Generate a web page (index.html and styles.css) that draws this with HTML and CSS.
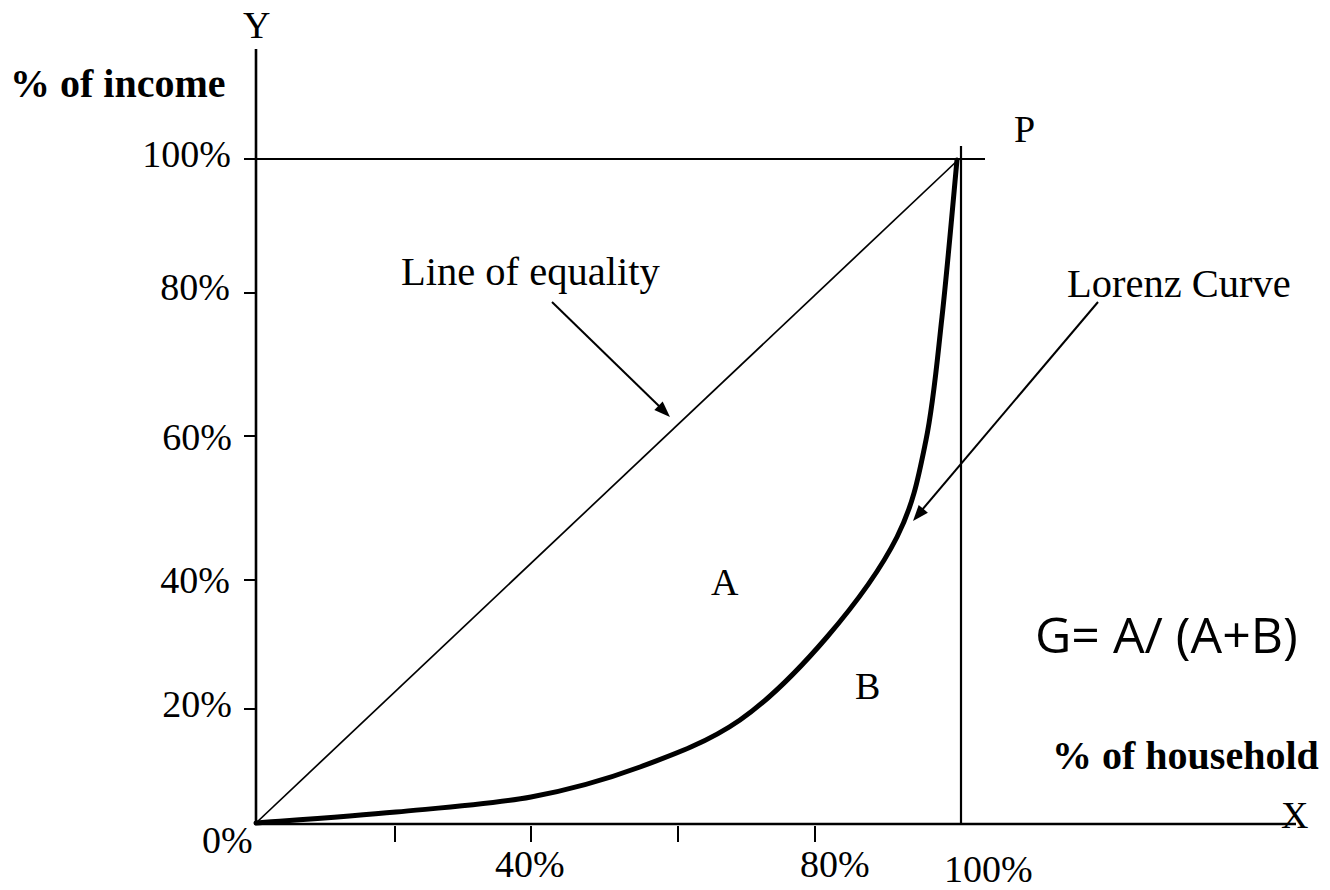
FILE: index.html
```html
<!DOCTYPE html>
<html lang="en">
<head>
<meta charset="utf-8">
<title>Lorenz Curve</title>
<link rel="stylesheet" href="styles.css">
</head>
<body>
<div class="figure">
<svg class="chart" width="1330" height="890" viewBox="0 0 1330 890" xmlns="http://www.w3.org/2000/svg">
  <!-- axes -->
  <line class="axis" x1="256" y1="49" x2="256" y2="825"/>
  <line class="axis" x1="255" y1="824" x2="1296" y2="824"/>
  <!-- 100% lines -->
  <line class="frame" x1="256" y1="159" x2="985" y2="159"/>
  <line class="frame" x1="961" y1="146" x2="961" y2="824"/>
  <!-- y ticks -->
  <line class="tick" x1="244" y1="159" x2="256" y2="159"/>
  <line class="tick" x1="244" y1="293" x2="256" y2="293"/>
  <line class="tick" x1="244" y1="436" x2="256" y2="436"/>
  <line class="tick" x1="244" y1="580" x2="256" y2="580"/>
  <line class="tick" x1="244" y1="709" x2="256" y2="709"/>
  <!-- x ticks -->
  <line class="tick" x1="395" y1="826" x2="395" y2="842"/>
  <line class="tick" x1="531" y1="826" x2="531" y2="842"/>
  <line class="tick" x1="678" y1="826" x2="678" y2="842"/>
  <line class="tick" x1="815" y1="826" x2="815" y2="842"/>
  <!-- line of equality -->
  <line class="equality" x1="256" y1="823" x2="958" y2="160"/>
  <!-- Lorenz curve -->
  <path class="lorenz" d="M256,823
    C279.3,821.2 350.2,816.3 396,812
    C441.8,807.7 490.3,804.5 531,797
    C571.7,789.5 605.2,779.8 640,767
    C674.8,754.2 708.8,741.7 740,720
    C771.2,698.3 800.8,667.5 827,637
    C853.2,606.5 880.5,569.8 897,537
    C913.5,504.2 918.5,476.7 926,440
    C933.5,403.3 936.8,363.7 942,317
    C947.2,270.3 954.5,186.2 957,160"/>
  <!-- arrows -->
  <line class="arrow" x1="552" y1="302" x2="660" y2="407"/>
  <polygon class="head" points="670,417 654.3,410.1 662.7,401.5"/>
  <line class="arrow" x1="1098" y1="302" x2="922" y2="510"/>
  <polygon class="head" points="913,521 918.7,504.9 927.9,512.7"/>

  <!-- text -->
  <text class="lbl" x="243" y="38">Y</text>
  <text class="title" x="10" y="97">% of income</text>
  <text class="lbl" x="231" y="167" text-anchor="end">100%</text>
  <text class="lbl" x="230" y="300" text-anchor="end">80%</text>
  <text class="lbl" x="232" y="450" text-anchor="end">60%</text>
  <text class="lbl" x="230" y="593" text-anchor="end">40%</text>
  <text class="lbl" x="232" y="717" text-anchor="end">20%</text>
  <text class="lbl" x="202" y="853">0%</text>
  <text class="lbl" x="495" y="877">40%</text>
  <text class="lbl" x="800" y="877">80%</text>
  <text class="lbl" x="944" y="882">100%</text>
  <text class="note" x="401" y="285">Line of equality</text>
  <text class="note" x="1067" y="297">Lorenz Curve</text>
  <text class="lbl" x="711" y="595">A</text>
  <text class="lbl" x="855" y="699">B</text>
  <text class="lbl" x="1014" y="142">P</text>
  <text class="lbl" x="1281" y="828">X</text>
  <text class="formula" x="1035" y="653">G= A/ (A+B)</text>
  <text class="title" x="1052" y="769">% of household</text>
</svg>
</div>
</body>
</html>
```

FILE: styles.css
```css
html, body {
  margin: 0;
  padding: 0;
  background: #ffffff;
}

.figure {
  width: 1330px;
  height: 890px;
  overflow: hidden;
}

.chart {
  display: block;
}

.axis {
  stroke: #000;
  stroke-width: 2.6;
}

.frame {
  stroke: #000;
  stroke-width: 2.2;
}

.tick {
  stroke: #000;
  stroke-width: 2;
}

.equality {
  stroke: #000;
  stroke-width: 1.7;
}

.lorenz {
  fill: none;
  stroke: #000;
  stroke-width: 5;
  stroke-linejoin: round;
  stroke-linecap: round;
}

.arrow {
  stroke: #000;
  stroke-width: 2;
}

.head {
  fill: #000;
}

.lbl {
  font-family: "Liberation Serif", "Times New Roman", serif;
  font-size: 38px;
  fill: #000;
}

.note {
  font-family: "Liberation Serif", "Times New Roman", serif;
  font-size: 40.5px;
  fill: #000;
}

.title {
  font-family: "Liberation Serif", "Times New Roman", serif;
  font-size: 40px;
  font-weight: bold;
  fill: #000;
}

.formula {
  font-family: "Open Sans", "Noto Sans", sans-serif;
  font-size: 50px;
  fill: #000;
}
```
